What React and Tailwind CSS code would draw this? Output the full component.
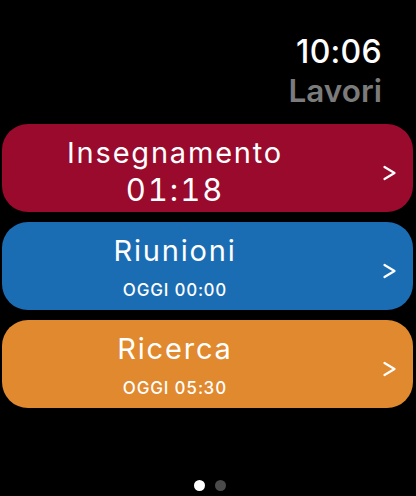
import React from "react";

function Chevron() {
  return (
    <svg width="13" height="16" viewBox="0 0 13 16" className="shrink-0 ml-[35px] mt-[10px]">
      <polyline points="1.5,2 11.5,8 1.5,14" fill="none" stroke="white" strokeWidth="2.2" strokeLinecap="round" strokeLinejoin="round" />
    </svg>
  );
}

function Card({ color, title, sub, big }) {
  return (
    <div className={`ml-[2px] w-[411px] h-[88px] rounded-[26px] flex items-center ${color}`}>
      <div className="w-[346px] self-stretch flex flex-col items-center pt-[12px] text-white">
        <div className="text-[29px] leading-[34px] font-normal tracking-[1.8px]">{title}</div>
        {big ? (
          <div className="text-[31px] leading-[36px] font-normal mt-[2px] tabular-nums tracking-[2px]">{sub}</div>
        ) : (
          <div className="text-[17px] leading-[20px] font-medium mt-[12px] tabular-nums tracking-[0.8px]">{sub}</div>
        )}
      </div>
      <Chevron />
    </div>
  );
}

export default function App() {
  return (
    <div className="w-[416px] h-[496px] bg-black flex flex-col overflow-hidden" style={{ fontFamily: "Inter, 'Noto Sans', sans-serif" }}>
      <div className="pt-[34px] pr-[34px] flex flex-col items-end">
        <div className="text-[32px] leading-[36px] font-medium text-white tracking-[0.3px]">10:06</div>
        <div className="text-[31.5px] leading-[36px] font-semibold text-[#7b7b7b] mt-[3px]">Lavori</div>
      </div>
      <div className="mt-[15px] flex flex-col gap-[10px]">
        <Card color="bg-[#990a2d]" title="Insegnamento" sub="01:18" big />
        <Card color="bg-[#1b6db3]" title="Riunioni" sub="OGGI 00:00" />
        <Card color="bg-[#e0892e]" title="Ricerca" sub="OGGI 05:30" />
      </div>
      <div className="mt-auto mb-[5px] flex justify-center gap-[10px] pl-[4px]">
        <div className="w-[11px] h-[11px] rounded-full bg-white" />
        <div className="w-[11px] h-[11px] rounded-full bg-[#4a4a4a]" />
      </div>
    </div>
  );
}
